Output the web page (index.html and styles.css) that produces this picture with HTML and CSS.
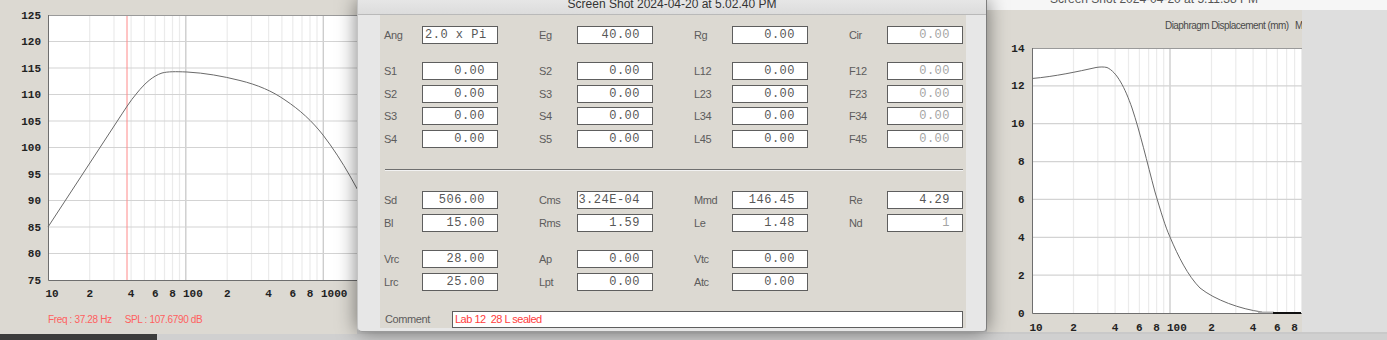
FILE: index.html
```html
<!DOCTYPE html>
<html lang="en">
<head>
<meta charset="utf-8">
<title>Box simulation</title>
<link rel="stylesheet" href="styles.css">
</head>
<body>
<div class="screen">
  <div class="row">
    <section class="win-left">
      <svg class="chart" width="357" height="305" viewBox="0 0 357 305">
        <rect class="plot" x="48" y="15" width="320" height="265"/>
        <path class="minor" d="M89.7 15V280M114 15V280M131.1 15V280M144.4 15V280M155.3 15V280M164.5 15V280M172.5 15V280M179.5 15V280M227.2 15V280M251.5 15V280M268.6 15V280M281.9 15V280M292.8 15V280M302 15V280M310 15V280M317 15V280"/>
        <path class="major" d="M185.8 15V280M323.3 15V280"/>
        <path class="hgrid" d="M48 41.5H357M48 68H357M48 94.5H357M48 121H357M48 147.5H357M48 174H357M48 200.5H357M48 227H357M48 253.5H357"/>
        <path class="marker" d="M127 15.5V280"/>
        <path class="axis-top" d="M48 15.5H357"/>
        <path class="axis" d="M48.5 15V280.5H357"/>
        <path class="curve" d="M48,227 L118,120 C124,111 130,101 137,93 C145,83 153,76 162,73 C168,71.5 175,71.5 187,72 C205,73 222,76 240,80.5 C258,85 272,91 285,100 C300,110 312,121 323,135 C333,148 342,162 350,176 L360,194"/>
        <g class="ylab">
          <text x="41" y="18.5">125</text>
          <text x="41" y="45">120</text>
          <text x="41" y="71.5">115</text>
          <text x="41" y="98">110</text>
          <text x="41" y="124.5">105</text>
          <text x="41" y="151">100</text>
          <text x="41" y="177.5">95</text>
          <text x="41" y="204">90</text>
          <text x="41" y="230.5">85</text>
          <text x="41" y="257">80</text>
          <text x="41" y="283.5">75</text>
        </g>
        <g class="xlab">
          <text x="45.5" y="297">10</text>
          <text class="c" x="89.7" y="297">2</text>
          <text class="c" x="131.1" y="297">4</text>
          <text class="c" x="155.3" y="297">6</text>
          <text class="c" x="172.5" y="297">8</text>
          <text x="183" y="297">100</text>
          <text class="c" x="227.2" y="297">2</text>
          <text class="c" x="268.6" y="297">4</text>
          <text class="c" x="292.8" y="297">6</text>
          <text class="c" x="310" y="297">8</text>
          <text x="321" y="297">1000</text>
        </g>
      </svg>
      <div class="readout"><span>Freq : 37.28 Hz</span><span>SPL : 107.6790 dB</span></div>
    </section>

    <section class="dialog">
      <header class="dlg-title"><span>Screen Shot 2024-04-20 at 5.02.40 PM</span></header>
      <div class="dlg-body">
        <div class="panel">
          <div class="fields g1">
            <div class="field"><label>Ang</label><div class="val left">2.0 x Pi</div></div>
            <div class="field"><label>Eg</label><div class="val">40.00</div></div>
            <div class="field"><label>Rg</label><div class="val">0.00</div></div>
            <div class="field"><label>Cir</label><div class="val dis">0.00</div></div>
          </div>
          <div class="fields g2">
            <div class="field"><label>S1</label><div class="val">0.00</div></div>
            <div class="field"><label>S2</label><div class="val">0.00</div></div>
            <div class="field"><label>L12</label><div class="val">0.00</div></div>
            <div class="field"><label>F12</label><div class="val dis">0.00</div></div>
            <div class="field"><label>S2</label><div class="val">0.00</div></div>
            <div class="field"><label>S3</label><div class="val">0.00</div></div>
            <div class="field"><label>L23</label><div class="val">0.00</div></div>
            <div class="field"><label>F23</label><div class="val dis">0.00</div></div>
            <div class="field"><label>S3</label><div class="val">0.00</div></div>
            <div class="field"><label>S4</label><div class="val">0.00</div></div>
            <div class="field"><label>L34</label><div class="val">0.00</div></div>
            <div class="field"><label>F34</label><div class="val dis">0.00</div></div>
            <div class="field"><label>S4</label><div class="val">0.00</div></div>
            <div class="field"><label>S5</label><div class="val">0.00</div></div>
            <div class="field"><label>L45</label><div class="val">0.00</div></div>
            <div class="field"><label>F45</label><div class="val dis">0.00</div></div>
          </div>
          <div class="sep"></div>
          <div class="fields g3">
            <div class="field"><label>Sd</label><div class="val">506.00</div></div>
            <div class="field"><label>Cms</label><div class="val">3.24E-04</div></div>
            <div class="field"><label>Mmd</label><div class="val">146.45</div></div>
            <div class="field"><label>Re</label><div class="val">4.29</div></div>
            <div class="field"><label>Bl</label><div class="val">15.00</div></div>
            <div class="field"><label>Rms</label><div class="val">1.59</div></div>
            <div class="field"><label>Le</label><div class="val">1.48</div></div>
            <div class="field"><label>Nd</label><div class="val dis">1</div></div>
          </div>
          <div class="fields g4">
            <div class="field"><label>Vrc</label><div class="val">28.00</div></div>
            <div class="field"><label>Ap</label><div class="val">0.00</div></div>
            <div class="field"><label>Vtc</label><div class="val">0.00</div></div>
            <div class="field"><label>Lrc</label><div class="val">25.00</div></div>
            <div class="field"><label>Lpt</label><div class="val">0.00</div></div>
            <div class="field"><label>Atc</label><div class="val">0.00</div></div>
          </div>
          <div class="comment"><label>Comment</label><div class="cbox">Lab 12  28 L sealed</div></div>
        </div>
      </div>
    </section>

    <section class="win-right">
      <div class="rw-title"><span>Screen Shot 2024-04-20 at 5.11.38 PM</span></div>
      <div class="rw-body">
        <div class="rw-chart">
          <svg class="chart" width="315" height="322" viewBox="987 10 315 322">
            <text class="cap" x="1165" y="29">Diaphragm Displacement (mm)</text>
            <text class="cap" x="1295" y="29">M</text>
            <rect class="plot" x="1032" y="48" width="270" height="265"/>
            <path class="minor" d="M1073.5 48V313M1097.8 48V313M1115.1 48V313M1128.5 48V313M1139.4 48V313M1148.6 48V313M1156.6 48V313M1163.7 48V313M1211.5 48V313M1235.8 48V313M1253.1 48V313M1266.5 48V313M1277.4 48V313M1286.6 48V313M1294.6 48V313M1301.7 48V313"/>
            <path class="major" d="M1170 48V313"/>
            <path class="hgrid" d="M1032 85.9H1302M1032 123.7H1302M1032 161.6H1302M1032 199.4H1302M1032 237.3H1302M1032 275.1H1302"/>
            <path class="axis-top" d="M1032 48.5H1302"/>
            <path class="axis" d="M1032.5 48V313.5H1302"/>
            <path class="curve" d="M1032,78.5 C1055,76.5 1078,71.5 1096,67.5 C1100,66.8 1104,66.8 1107,67.5 C1117,72 1125,88 1132,108 C1140,132 1147,162 1155,192 C1161,212 1165,226 1170,237 C1178,256 1188,276 1200,288 C1215,300 1240,309 1262,312"/>
            <path class="tail-gray" d="M1258 312.3H1274"/>
            <path class="tail" d="M1273 313H1301"/>
            <g class="ylab">
              <text x="1024.5" y="51.5">14</text>
              <text x="1024.5" y="89.4">12</text>
              <text x="1024.5" y="127.2">10</text>
              <text x="1024.5" y="165.1">8</text>
              <text x="1024.5" y="202.9">6</text>
              <text x="1024.5" y="240.8">4</text>
              <text x="1024.5" y="278.6">2</text>
              <text x="1024.5" y="316.5">0</text>
            </g>
            <g class="xlab">
              <text x="1029.5" y="330.5">10</text>
              <text class="c" x="1073.5" y="330.5">2</text>
              <text class="c" x="1115.1" y="330.5">4</text>
              <text class="c" x="1139.4" y="330.5">6</text>
              <text class="c" x="1156.6" y="330.5">8</text>
              <text x="1167" y="330.5">100</text>
              <text class="c" x="1211.5" y="330.5">2</text>
              <text class="c" x="1253.1" y="330.5">4</text>
              <text class="c" x="1277.4" y="330.5">6</text>
              <text class="c" x="1294.6" y="330.5">8</text>
            </g>
          </svg>
        </div>
        <div class="rw-side"></div>
      </div>
    </section>
  </div>
  <div class="bottom"><div class="dock"></div><div class="bottom-rest"></div></div>
</div>
</body>
</html>
```

FILE: styles.css
```css
html, body {
  margin: 0;
  padding: 0;
}
body {
  width: 1387px;
  height: 340px;
  overflow: hidden;
  background: #cbcbcb;
  font-family: "Liberation Sans", Arial, sans-serif;
}
.screen {
  display: flex;
  flex-direction: column;
  height: 340px;
}
.row {
  display: flex;
  height: 334px;
  background: #c9c9c9;
}

/* left window */
.win-left {
  width: 357px;
  flex: none;
  background: #dcd9d2;
  overflow: hidden;
}
.chart {
  display: block;
}
.plot { fill: #fff; }
.minor { stroke: #ebebeb; stroke-width: 1.2; fill: none; }
.major { stroke: #cdcdcd; stroke-width: 1.4; fill: none; }
.hgrid { stroke: #d3d3d3; stroke-width: 1.2; fill: none; }
.marker { stroke: #ff8a8a; stroke-width: 1; fill: none; }
.axis-top { stroke: #9a9a9a; stroke-width: 1; fill: none; }
.axis { stroke: #6e6e6e; stroke-width: 1; fill: none; }
.curve { stroke: #6a6a6a; stroke-width: 1; fill: none; }
.tail-gray { stroke: #b0b0b0; stroke-width: 1.6; fill: none; }
.tail { stroke: #111; stroke-width: 2; fill: none; }
.ylab text {
  font-family: "Liberation Mono", "Courier New", monospace;
  font-weight: bold;
  font-size: 11px;
  fill: #222;
  text-anchor: end;
}
.xlab text {
  font-family: "Liberation Mono", "Courier New", monospace;
  font-weight: bold;
  font-size: 11px;
  fill: #222;
}
.xlab text.c { text-anchor: middle; }
.cap {
  font-family: "Liberation Sans", Arial, sans-serif;
  font-size: 10px;
  letter-spacing: -0.55px;
  fill: #4a4a4a;
}
.readout {
  display: flex;
  gap: 13px;
  margin-top: 9px;
  padding-left: 48px;
  font-size: 10px;
  line-height: 12px;
  letter-spacing: -0.35px;
  color: #ff5f5f;
}

/* dialog */
.dialog {
  width: 630px;
  height: 332px;
  flex: none;
  box-sizing: border-box;
  position: relative;
  z-index: 1;
  display: flex;
  flex-direction: column;
  background: #e7e7e7;
  border-left: 1px solid #c4c4c4;
  border-right: 1px solid #7d7d7d;
  border-bottom: 1px solid #9a9a9a;
  border-radius: 0 0 4px 5px;
  box-shadow: 0 0 20px rgba(0, 0, 0, 0.5);
}
.dlg-title {
  height: 15px;
  box-sizing: border-box;
  overflow: hidden;
  border-bottom: 1px solid #b9b9b9;
  background: linear-gradient(#e6e6e6, #dcdcdc);
  text-align: center;
  font-size: 12px;
  line-height: 14px;
  color: #333;
}
.dlg-title span {
  display: block;
  margin-top: -3px;
}
.dlg-body {
  flex: 1;
  display: flex;
  padding: 0 20px 3px 22px;
}
.panel {
  flex: 1;
  background: #dcd9d2;
  padding: 11px 0 0 4px;
}
.fields {
  display: grid;
  grid-template-columns: 155px 155px 155px 114px;
  row-gap: 4.67px;
}
.g2 { margin-top: 18px; }
.g3 { margin-top: 20px; }
.g4 {
  margin-top: 18.33px;
  grid-template-columns: 155px 155px 114px;
}
.field {
  display: flex;
  align-items: center;
  height: 18px;
}
.field label,
.comment label {
  width: 38px;
  flex: none;
  font-size: 11px;
  letter-spacing: -0.4px;
  color: #5c5c5c;
}
.val {
  width: 76px;
  height: 18px;
  flex: none;
  box-sizing: border-box;
  border: 1px solid #5e5e5e;
  background: #fff;
  font-family: "Liberation Mono", "Courier New", monospace;
  font-size: 12px;
  line-height: 16px;
  letter-spacing: 0.5px;
  color: #575757;
  text-align: right;
  padding-right: 12px;
  white-space: pre;
}
.val.left {
  text-align: left;
  padding: 0 0 0 2px;
}
.val.dis { color: #a4a4a4; }
.sep {
  margin: 21px 0 0 1px;
  width: 578px;
  border-top: 1px solid #6f6f6f;
  border-bottom: 1px solid #f2f2f2;
}
.comment {
  display: flex;
  align-items: center;
  margin-top: 20.33px;
  padding-left: 1px;
}
.comment label { width: 67px; }
.cbox {
  width: 511px;
  height: 17px;
  box-sizing: border-box;
  border: 1px solid #5e5e5e;
  background: #fff;
  padding-left: 2px;
  font-size: 11px;
  line-height: 15px;
  letter-spacing: -0.5px;
  color: #ff3c3c;
  white-space: pre;
}

/* right window */
.win-right {
  width: 400px;
  height: 332px;
  flex: none;
  display: flex;
  flex-direction: column;
}
.rw-title {
  height: 10px;
  overflow: hidden;
  background: #f6f6f6;
  padding-left: 63px;
  font-size: 12px;
  line-height: 14px;
  color: #555;
  white-space: nowrap;
}
.rw-title span {
  display: block;
  margin-top: -7.7px;
}
.rw-body {
  flex: 1;
  display: flex;
}
.rw-chart {
  width: 315px;
  flex: none;
  background: #dcd9d2;
}
.rw-side {
  flex: 1;
  background: #dedede;
}

/* bottom strip */
.bottom {
  display: flex;
  height: 6px;
}
.dock {
  width: 157px;
  background: #3c3c3c;
}
.bottom-rest {
  flex: 1;
  background: #d0d0d0;
}
```
